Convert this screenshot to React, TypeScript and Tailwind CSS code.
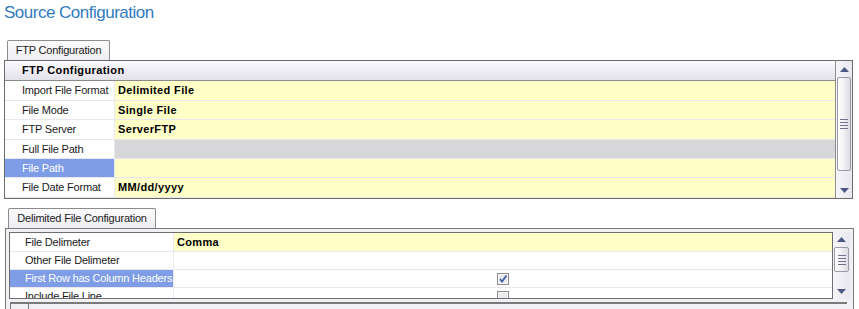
import React from 'react';

type Row = {
  label: string;
  value?: string;
  height: number;
  valueBg?: string;
  selected?: boolean;
  checkbox?: 'on' | 'off';
};

const ftpRows: Row[] = [
  { label: 'Import File Format', value: 'Delimited File', height: 20, valueBg: 'bg-[#ffffc8]' },
  { label: 'File Mode', value: 'Single File', height: 19, valueBg: 'bg-[#ffffc8]' },
  { label: 'FTP Server', value: 'ServerFTP', height: 20, valueBg: 'bg-[#ffffc8]' },
  { label: 'Full File Path', height: 19, valueBg: 'bg-[#d7d6d9]' },
  { label: 'File Path', height: 19, valueBg: 'bg-[#ffffc8]', selected: true },
  { label: 'File Date Format', value: 'MM/dd/yyyy', height: 20, valueBg: 'bg-[#ffffc8]' },
];

const delimRows: Row[] = [
  { label: 'File Delimeter', value: 'Comma', height: 19, valueBg: 'bg-[#ffffc8]' },
  { label: 'Other File Delimeter', height: 18, valueBg: 'bg-white' },
  { label: 'First Row has Column Headers', height: 18, valueBg: 'bg-white', selected: true, checkbox: 'on' },
  { label: 'Include File Line', height: 18, valueBg: 'bg-white', checkbox: 'off' },
];

const Arrow = ({ down }: { down?: boolean }) => (
  <svg width="9" height="5" viewBox="0 0 9 5">
    {down ? <polygon points="0,0 9,0 4.5,5" fill="#4b5884" /> : <polygon points="4.5,0 9,5 0,5" fill="#4b5884" />}
  </svg>
);

const Thumb = ({ height }: { height: number }) => (
  <div
    className="mx-[1px] rounded-[2px] border border-[#9b9aa5] bg-linear-to-r from-[#ffffff] via-[#f1f0f5] to-[#dcdae4] flex flex-col items-center justify-center gap-[2px]"
    style={{ height }}
  >
    <div className="w-[8px] h-px bg-[#6f7288]" />
    <div className="w-[8px] h-px bg-[#6f7288]" />
    <div className="w-[8px] h-px bg-[#6f7288]" />
    <div className="w-[8px] h-px bg-[#6f7288]" />
  </div>
);

const ScrollBar = ({ top, thumb, bottom, width }: { top: number; thumb: number; bottom: number; width: number }) => (
  <div className="h-full flex flex-col bg-linear-to-r from-[#f6f5f9] to-[#e9e7ef]" style={{ width }}>
    <div className="flex items-center justify-center shrink-0" style={{ height: top }}>
      <Arrow />
    </div>
    <Thumb height={thumb} />
    <div className="flex-1" />
    <div className="flex items-center justify-center shrink-0" style={{ height: bottom }}>
      <Arrow down />
    </div>
  </div>
);

const CheckBox = ({ checked }: { checked: boolean }) => (
  <svg width="12" height="12" viewBox="0 0 12 12">
    <rect x="0.5" y="0.5" width="11" height="11" fill="#e9e9ee" stroke="#8a8a8a" />
    <rect x="1.5" y="1.5" width="9" height="9" fill="none" stroke="#ffffff" strokeOpacity="0.7" />
    {checked && <path d="M3 6 L5 8.5 L9.5 2.5" fill="none" stroke="#3f5d9f" strokeWidth="1.8" />}
  </svg>
);

const GridRow = ({ row, labelWidth, labelPad }: { row: Row; labelWidth: number; labelPad: number }) => (
  <div className="flex shrink-0 border-b border-[#e9e6ee]" style={{ height: row.height }}>
    <div
      className={`flex items-center shrink-0 border-r border-[#ebe8ef] ${row.selected ? 'bg-[#7e9de6] text-white' : 'bg-white text-[#1a1a1a]'}`}
      style={{ width: labelWidth, paddingLeft: labelPad }}
    >
      {row.label}
    </div>
    <div className={`flex-1 flex items-center pl-[3px] font-bold tracking-[0.35px] text-black ${row.valueBg}`}>
      {row.value}
      {row.checkbox && (
        <div className="pl-[320px] flex items-center">
          <CheckBox checked={row.checkbox === 'on'} />
        </div>
      )}
    </div>
  </div>
);

const Tab = ({ label, width }: { label: string; width: number }) => (
  <div
    className="h-[20px] border border-b-0 border-[#8c8c8c] rounded-t-[2px] bg-linear-to-b from-[#fbfbfc] to-[#eeedf1] flex items-center justify-center text-[#1a1a1a]"
    style={{ width }}
  >
    {label}
  </div>
);

export default function App() {
  return (
    <div className="w-[859px] h-[309px] overflow-hidden bg-white font-['Liberation_Sans',Arial,sans-serif] text-[11px] tracking-[-0.2px]">
      <div className="h-[40px] pl-[4px] pt-[2px]">
        <h1 className="text-[17px] leading-[22px] tracking-[-0.5px] text-[#2f7bbf]">Source Configuration</h1>
      </div>

      <div className="pl-[7px]">
        <Tab label="FTP Configuration" width={103} />
      </div>
      <div className="ml-[4px] w-[849px] h-[139px] border border-[#6b6b6b] flex">
        <div className="flex-1 flex flex-col border-r border-[#8d8d8d]">
          <div className="h-[20px] shrink-0 flex items-center pl-[17px] font-bold tracking-[0.4px] text-black bg-linear-to-b from-[#fbfaff] to-[#e3e1ea] border-b border-[#8a8a8a]">
            FTP Configuration
          </div>
          {ftpRows.map((r) => (
            <GridRow key={r.label} row={r} labelWidth={110} labelPad={17} />
          ))}
        </div>
        <ScrollBar top={16} thumb={94} bottom={16} width={16} />
      </div>

      <div className="pl-[8px] mt-[9px]">
        <Tab label="Delimited File Configuration" width={148} />
      </div>
      <div className="ml-[5px] w-[849px] h-[90px] border border-[#7a7a7a] p-[3px] bg-[#f1f0f4]">
        <div className="flex h-[67px]">
          <div className="flex-1 border border-[#6e6e6e] overflow-hidden flex flex-col bg-white">
            {delimRows.map((r) => (
              <GridRow key={r.label} row={r} labelWidth={164} labelPad={15} />
            ))}
          </div>
          <ScrollBar top={15} thumb={25} bottom={16} width={17} />
        </div>
        <div className="mt-[3px] ml-[1px] mr-[3px] h-[20px] border-t-2 border-l border-[#7a7a7a] flex">
          <div className="w-[18px] border-r border-[#7a7a7a]" />
        </div>
      </div>
    </div>
  );
}
